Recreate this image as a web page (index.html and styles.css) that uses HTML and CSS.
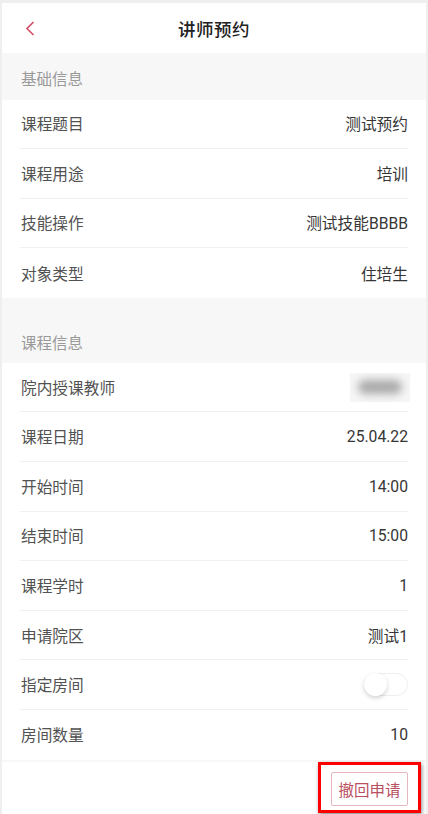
FILE: index.html
```html
<!DOCTYPE html>
<html lang="zh-CN">
<head>
    <meta charset="UTF-8">
    <meta name="viewport" content="width=device-width, initial-scale=1.0">
    <title>讲师预约</title>
    <link rel="stylesheet" href="styles.css">
</head>
<body>
    <div class="page">
        <header class="nav-bar">
            <a class="back" href="#">
                <svg width="10" height="15" viewBox="0 0 10 15"><polyline points="8.5,1 2,7.5 8.5,14" fill="none" stroke="#d24b64" stroke-width="1.6"/></svg>
            </a>
            <h1>讲师预约</h1>
        </header>

        <div class="section-title">基础信息</div>
        <ul class="rows">
            <li><span class="label">课程题目</span><span class="value">测试预约</span></li>
            <li><span class="label">课程用途</span><span class="value">培训</span></li>
            <li><span class="label">技能操作</span><span class="value">测试技能BBBB</span></li>
            <li><span class="label">对象类型</span><span class="value">住培生</span></li>
        </ul>

        <div class="section-title spaced">课程信息</div>
        <ul class="rows">
            <li><span class="label">院内授课教师</span><span class="value blurred"><i></i></span></li>
            <li><span class="label">课程日期</span><span class="value">25.04.22</span></li>
            <li><span class="label">开始时间</span><span class="value">14:00</span></li>
            <li><span class="label">结束时间</span><span class="value">15:00</span></li>
            <li><span class="label">课程学时</span><span class="value">1</span></li>
            <li><span class="label">申请院区</span><span class="value">测试1</span></li>
            <li><span class="label">指定房间</span><span class="switch"><i></i></span></li>
            <li><span class="label">房间数量</span><span class="value">10</span></li>
        </ul>

        <div class="footer">
            <div class="btn-wrap">
                <button class="btn-revoke">撤回申请</button>
                <span class="highlight"></span>
            </div>
        </div>
    </div>
</body>
</html>
```

FILE: styles.css
```css
:root {
    --outer-color: #efefef;
    --section-color: #f7f7f7;
    --line-color: #f0f0f0;
    --label-color: #525252;
    --value-color: #363636;
    --accent-color: #b8505f;
}

* {
    box-sizing: border-box;
}

html, body {
    margin: 0;
    padding: 0;
    height: 100%;
}

body {
    background-color: var(--outer-color);
    font-family: Roboto, "Noto Sans CJK SC", sans-serif;
    overflow: hidden;
}

.page {
    margin: 3px 2px 0;
    min-height: 811px;
    background-color: #fff;
    display: flex;
    flex-direction: column;
}

.nav-bar {
    height: 50px;
    display: flex;
    align-items: center;
    justify-content: center;
    position: relative;
    background: #fff;
}

.nav-bar h1 {
    margin: 0;
    font-size: 17.5px;
    font-weight: 500;
    color: #222;
    letter-spacing: 0.5px;
}

.back {
    position: absolute;
    left: 23px;
    top: 18px;
    display: flex;
}

.section-title {
    height: 46.5px;
    padding: 16px 0 0 19px;
    background-color: var(--section-color);
    color: #9a9a9a;
    font-size: 15.5px;
    line-height: 22px;
}

.section-title.spaced {
    height: 65px;
    padding-top: 35px;
}

.rows {
    list-style: none;
    margin: 0;
    padding: 0;
    background: #fff;
}

.rows li {
    height: 49.6px;
    margin: 0 18px;
    display: flex;
    align-items: center;
    justify-content: space-between;
    border-bottom: 1px solid var(--line-color);
    font-size: 15.7px;
}

.rows li:last-child {
    border-bottom: none;
}

.label {
    color: var(--label-color);
    padding-left: 1px;
}

.value {
    color: var(--value-color);
}

.blurred {
    width: 60px;
    height: 29px;
    margin-right: -2px;
    background: #f6f6f6;
    display: flex;
    align-items: center;
    justify-content: center;
    overflow: hidden;
}

.blurred i {
    width: 44px;
    height: 14px;
    background: #a9a9a9;
    border-radius: 7px;
    filter: blur(4px);
}

.switch {
    width: 44px;
    height: 23px;
    border: 1px solid #eeeeee;
    border-radius: 12px;
    background: #fff;
    position: relative;
}

.switch i {
    position: absolute;
    left: -1px;
    top: -1px;
    width: 23px;
    height: 23px;
    border-radius: 50%;
    background: #fff;
    box-shadow: 0 2px 4px rgba(0, 0, 0, 0.18);
}

.footer {
    flex: 1;
    border-top: 2px solid var(--section-color);
    display: flex;
    justify-content: flex-end;
    align-items: flex-start;
    padding: 10px 18px 0 0;
}

.btn-wrap {
    position: relative;
    display: flex;
}

.btn-revoke {
    width: 77px;
    height: 34px;
    padding: 0;
    border: 1px solid #e3b7bd;
    border-radius: 2px;
    background: #fff;
    color: var(--accent-color);
    font-family: inherit;
    font-size: 15.5px;
}

.highlight {
    position: absolute;
    top: -10px;
    right: -13px;
    bottom: -7px;
    left: -13px;
    border: 3px solid #ff0000;
    box-shadow: 1px 2px 4px rgba(0, 0, 0, 0.45);
    pointer-events: none;
}
```
